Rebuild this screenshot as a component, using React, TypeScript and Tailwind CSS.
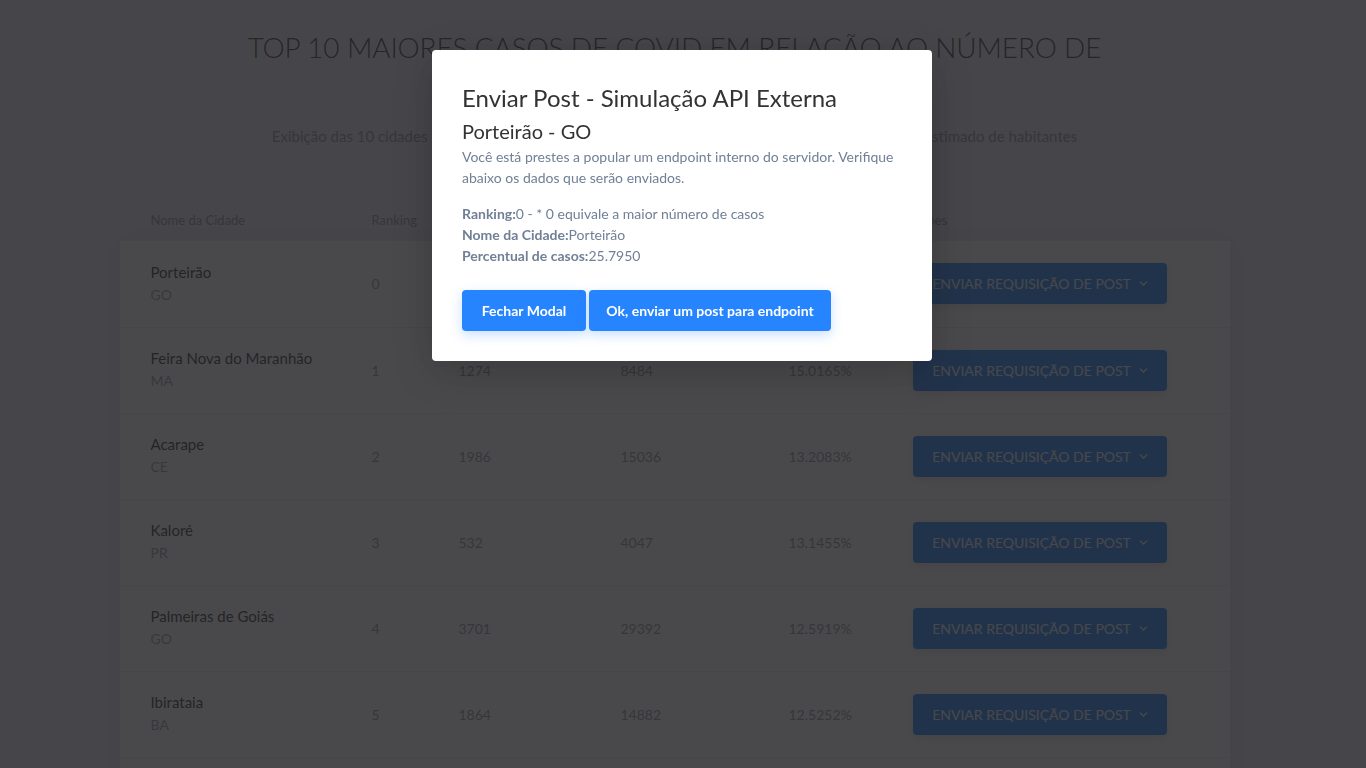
import { ChevronDown } from 'lucide-react'

type Cidade = {
  nome: string
  uf: string
  ranking: number
  casos: number
  habitantes: number
  percentual: string
}

const cidades: Cidade[] = [
  { nome: 'Porteirão', uf: 'GO', ranking: 0, casos: 1118, habitantes: 4334, percentual: '25.7950%' },
  { nome: 'Feira Nova do Maranhão', uf: 'MA', ranking: 1, casos: 1274, habitantes: 8484, percentual: '15.0165%' },
  { nome: 'Acarape', uf: 'CE', ranking: 2, casos: 1986, habitantes: 15036, percentual: '13.2083%' },
  { nome: 'Kaloré', uf: 'PR', ranking: 3, casos: 532, habitantes: 4047, percentual: '13.1455%' },
  { nome: 'Palmeiras de Goiás', uf: 'GO', ranking: 4, casos: 3701, habitantes: 29392, percentual: '12.5919%' },
  { nome: 'Ibirataia', uf: 'BA', ranking: 5, casos: 1864, habitantes: 14882, percentual: '12.5252%' },
  { nome: 'Nova Fátima', uf: 'BA', ranking: 6, casos: 926, habitantes: 7602, percentual: '12.1810%' },
]

export default function App() {
  return (
    <div className="relative h-screen overflow-hidden bg-[#ececf9] font-['Lato',sans-serif]">
      {/* pagina por tras do modal */}
      <div className="pr-[17px]">
        <div className="mx-auto max-w-[900px] pt-[26px] text-center">
          <h1 className="text-[28px] font-light leading-[42px] tracking-[-0.15px] text-[#3c3c3c]">
            TOP 10 MAIORES CASOS DE COVID EM RELAÇÃO AO NÚMERO DE HABITANTES
          </h1>
          <p className="mt-[16px] text-[15px] leading-[21px] text-[#94949e]">
            Exibição das 10 cidades com o maior número de casos confirmados de covid em relação ao número estimado de habitantes
          </p>
        </div>

        <div className="mx-auto mt-[53px] w-[1110px]">
          <table className="w-full table-fixed border-collapse text-left">
            <colgroup>
              <col className="w-[221px]" />
              <col className="w-[87px]" />
              <col className="w-[162px]" />
              <col className="w-[168px]" />
              <col className="w-[124px]" />
              <col />
            </colgroup>
            <thead>
              <tr className="h-[41px] text-[13px] text-[#94949e]">
                <th className="pl-[31px] font-normal">Nome da Cidade</th>
                <th className="pl-[31px] font-normal">Ranking</th>
                <th className="pl-[31px] font-normal">Casos</th>
                <th className="pl-[31px] font-normal">Habitantes</th>
                <th className="pl-[31px] font-normal">Percentual</th>
                <th className="pl-[31px] font-normal">Ações</th>
              </tr>
            </thead>
            <tbody className="bg-white shadow-[0_0_30px_rgba(0,0,0,0.08)]">
              {cidades.map((c) => (
                <tr key={c.ranking} className="h-[86px] border-b border-[#ececf4]">
                  <td className="pl-[31px]">
                    <div className="text-[15px] leading-[22px] text-[#333333]">{c.nome}</div>
                    <div className="text-[14px] leading-[24px] text-[#9c9ca4]">{c.uf}</div>
                  </td>
                  <td className="pl-[31px] text-[14px] text-[#94949c]">{c.ranking}</td>
                  <td className="pl-[31px] text-[14px] text-[#94949c]">{c.casos}</td>
                  <td className="pl-[31px] text-[14px] text-[#94949c]">{c.habitantes}</td>
                  <td className="pl-[31px] text-[14px] text-[#94949c]">{c.percentual}</td>
                  <td className="pl-[31px]">
                    <button className="flex h-[41px] w-[254px] items-center justify-center gap-[6px] rounded-[4px] bg-[#2684ff] pl-[3px] text-[14px] text-[#f4f6fa] shadow-[0_3px_10px_rgba(0,0,0,0.12)]">
                      ENVIAR REQUISIÇÃO DE POST
                      <ChevronDown size={13} strokeWidth={2.5} />
                    </button>
                  </td>
                </tr>
              ))}
            </tbody>
          </table>
        </div>
      </div>

      {/* overlay + modal */}
      <div className="fixed inset-0 flex justify-center bg-[rgba(33,33,35,0.82)] pr-[2px] pt-[50px]">
        <div className="h-fit w-[500px] rounded-[4px] bg-white px-[30px] pb-[30px] pt-[30px] shadow-[0_10px_40px_rgba(0,0,0,0.2)]">
          <h2 className="text-[24px] leading-[36px] text-[#333333]">Enviar Post - Simulação API Externa</h2>
          <h3 className="text-[20px] leading-[30px] text-[#333333]">Porteirão - GO</h3>
          <p className="text-[14px] leading-[21px] text-[#718096]">
            Você está prestes a popular um endpoint interno do servidor. Verifique abaixo os dados que serão enviados.
          </p>
          <div className="mt-[15px] text-[14px] leading-[21px] text-[#718096]">
            <div>
              <span className="font-bold">Ranking:</span>0 - * 0 equivale a maior número de casos
            </div>
            <div>
              <span className="font-bold">Nome da Cidade:</span>Porteirão
            </div>
            <div>
              <span className="font-bold">Percentual de casos:</span>25.7950
            </div>
          </div>
          <div className="mt-[24px] flex gap-[3px]">
            <button className="h-[41px] w-[124px] rounded-[4px] bg-[#2684ff] text-[14px] font-bold text-white shadow-[0_4px_12px_rgba(38,132,255,0.25)]">
              Fechar Modal
            </button>
            <button className="h-[41px] w-[242px] rounded-[4px] bg-[#2684ff] text-[14px] font-bold text-white shadow-[0_4px_12px_rgba(38,132,255,0.25)]">
              Ok, enviar um post para endpoint
            </button>
          </div>
        </div>
      </div>
    </div>
  )
}
